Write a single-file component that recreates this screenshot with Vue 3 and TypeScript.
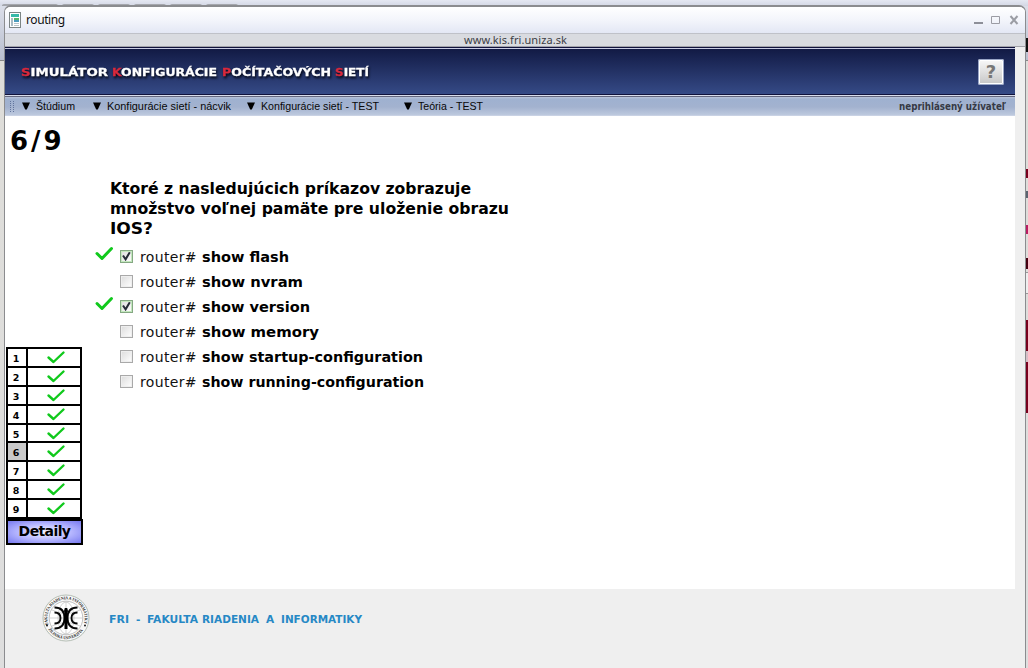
<script setup lang="ts">
interface MenuItem { label: string; cls: string; width: number }
interface Answer { command: string; checked: boolean; width: number }

const menu: MenuItem[] = [
  { label: 'Štúdium', cls: 'm1', width: 39 },
  { label: 'Konfigurácie sietí - nácvik', cls: 'm2', width: 124 },
  { label: 'Konfigurácie sietí - TEST', cls: 'm3', width: 118 },
  { label: 'Teória - TEST', cls: 'm4', width: 65 },
]

const question: string[] = [
  'Ktoré z nasledujúcich príkazov zobrazuje',
  'množstvo voľnej pamäte pre uloženie obrazu',
  'IOS?',
]

const answers: Answer[] = [
  { command: 'show flash', checked: true, width: 87 },
  { command: 'show nvram', checked: false, width: 101 },
  { command: 'show version', checked: true, width: 108 },
  { command: 'show memory', checked: false, width: 117 },
  { command: 'show startup-configuration', checked: false, width: 221 },
  { command: 'show running-configuration', checked: false, width: 222 },
]
const lineWidths: number[] = [361, 399, 43]
const current = 6
</script>

<template>
  <div class="desktop">
    <div class="backdrop">
      <div class="tabs"><i></i><i></i><i></i><i></i><i></i><i></i></div>
      <b class="r1"></b><b class="r2"></b><b class="r3"></b><b class="r4"></b>
      <b class="r5"></b><b class="r6"></b><b class="r7"></b><b class="r8"></b>
    </div>
    <div class="window">
      <div class="titlebar">
        <svg class="page-icon" width="12" height="16" viewBox="0 0 12 16">
          <rect x=".5" y=".5" width="11" height="15" fill="#fff" stroke="#7c8585" />
          <rect x="2" y="2" width="8" height="3" fill="#36b9a9" />
          <rect x="2" y="6" width="2" height="8" fill="#a9bcc4" />
          <rect x="5" y="6" width="5" height="2" fill="#55b56b" />
          <rect x="5" y="8" width="5" height="2" fill="#4b9cbd" />
          <path d="M5 11.5h5M5 13.5h5" stroke="#b8c3c8" />
        </svg>
        <span class="title">routing</span>
        <svg class="controls" width="48" height="14" viewBox="0 0 48 14">
          <rect x="1" y="9" width="9" height="2" fill="#8d8f98" />
          <path d="M18.500 3.500h8v7h-8z" fill="none" stroke="#9b9ca4" />
          <path d="M37.500 3l7 8M44.500 3l-7 8" stroke="#9b9da4" stroke-width="2" />
        </svg>
      </div>
      <div class="address"><span>www.kis.fri.uniza.sk</span></div>
      <div class="page">
        <header class="header">
          <svg class="logo" width="360" height="24" viewBox="0 0 360 24">
            <g class="logo-text">
              <text x="0" y="16.500" textLength="87" lengthAdjust="spacingAndGlyphs"><tspan class="red">S</tspan>IMULÁTOR</text>
              <text x="91" y="16.500" textLength="105" lengthAdjust="spacingAndGlyphs"><tspan class="red">K</tspan>ONFIGURÁCIE</text>
              <text x="201" y="16.500" textLength="109" lengthAdjust="spacingAndGlyphs"><tspan class="red">P</tspan>OČÍTAČOVÝCH</text>
              <text x="314" y="16.500" textLength="34" lengthAdjust="spacingAndGlyphs"><tspan class="red">S</tspan>IETÍ</text>
            </g>
          </svg>
          <div class="help"><span>?</span></div>
        </header>
        <nav class="menu">
          <svg class="grip" width="6" height="11" viewBox="0 0 6 11">
            <path d="M1.500 0v11M4.500 0v11" stroke="#61749c" stroke-dasharray="1 1" />
          </svg>
          <div v-for="m in menu" :key="m.label" class="menu-item" :class="m.cls">
            <svg class="arrow" width="8" height="8" viewBox="0 0 8 8"><path d="M0 .5h8L4.800 7.500h-1.600z" /></svg>
            <svg class="menu-label" :width="m.width + 4" height="15">
              <text x="0" y="11" :textLength="m.width" lengthAdjust="spacingAndGlyphs">{{ m.label }}</text>
            </svg>
          </div>
          <svg class="user" width="112" height="15">
            <text x="1" y="11" textLength="107" lengthAdjust="spacingAndGlyphs">neprihlásený užívateľ</text>
          </svg>
        </nav>
        <main class="content">
          <aside class="side">
            <div class="progress">6/9</div>
            <div class="results">
              <div v-for="n in 9" :key="n" class="result">
                <span class="num" :class="{ current: n === current }">{{ n }}</span>
                <span class="mark">
                  <svg width="18" height="13" viewBox="0 0 18 13"><path d="M1.500 6.500L6.500 11L16.500 1.500" /></svg>
                </span>
              </div>
            </div>
            <button class="details">Detaily</button>
          </aside>
          <section class="quiz">
            <svg class="question" width="420" height="60">
              <text v-for="(q, i) in question" :key="q" x="0" :y="15.5 + i * 20" :textLength="lineWidths[i]" lengthAdjust="spacingAndGlyphs">{{ q }}</text>
            </svg>
            <div v-for="a in answers" :key="a.command" class="answer">
              <span class="tick">
                <svg v-if="a.checked" width="18" height="14" viewBox="0 0 18 14"><path d="M2 6.500L7 11.500L16.500 1.500" /></svg>
              </span>
              <span class="box" :class="{ checked: a.checked }">
                <svg v-if="a.checked" width="11" height="11" viewBox="0 0 11 11"><path d="M2 4.500L4.600 8.300L8.800 1.200" /></svg>
              </span>
              <svg class="label" width="300" height="24">
                <text class="prompt" x="0" y="16.500" textLength="56.500">router#</text>
                <text class="command" x="62" y="16.500" :textLength="a.width" lengthAdjust="spacingAndGlyphs">{{ a.command }}</text>
              </svg>
            </div>
          </section>
        </main>
      </div>
      <footer class="footer">
        <svg class="seal" width="48" height="48" viewBox="0 0 48 48">
          <defs>
            <path id="sealTop" d="M6.400 30.400A18.700 18.700 0 1 1 41.600 30.400" />
            <path id="sealBottom" d="M5.200 33.600A21.100 21.100 0 0 0 42.800 33.600" />
          </defs>
          <circle cx="24" cy="24" r="23" fill="#f8f8f8" stroke="#9aa69a" stroke-width=".7" />
          <circle cx="24" cy="24" r="16.800" fill="#fff" stroke="#999" stroke-width=".6" />
          <g fill="none" stroke="#b5b5b5" stroke-width=".6">
            <ellipse cx="24" cy="24" rx="8" ry="16" />
            <path d="M8 24h32M10 16q14 7 28 0M10 32q14-7 28 0M24 8v32" />
          </g>
          <text class="seal-text"><textPath href="#sealTop" textLength="70" lengthAdjust="spacingAndGlyphs">FAKULTA RIADENIA A INFORMATIKY</textPath></text>
          <text class="seal-text"><textPath href="#sealBottom" startOffset="2" textLength="41" lengthAdjust="spacingAndGlyphs">ŽILINSKÁ UNIVERZITA</textPath></text>
          <circle cx="5" cy="31.500" r=".9" /><circle cx="43" cy="31.500" r=".9" />
          <g fill="none" stroke="#080808" stroke-width="1.900">
            <path d="M12.500 13.500C19.500 13.500 22.500 18 22.500 24s-3 10.500-10 10.500" />
            <path d="M35.500 13.500C28.500 13.500 25.500 18 25.500 24s3 10.500 10 10.500" />
            <path d="M12.500 18.500c4 0 6 2 6 5.500s-2 5.500-6 5.500M35.500 18.500c-4 0-6 2-6 5.500s2 5.500 6 5.500" />
          </g>
          <path d="M22.800 14h2.400l.8 3-.5 2 .7 5-.7 6v5h-3v-5l-.7-6 .7-5-.5-2z" />
        </svg>
        <svg class="faculty" width="260" height="16">
          <text x="0" y="12" textLength="20" lengthAdjust="spacingAndGlyphs">FRI</text>
          <text x="27" y="12">-</text>
          <text x="38" y="12" textLength="51" lengthAdjust="spacingAndGlyphs">FAKULTA</text>
          <text x="93" y="12" textLength="57" lengthAdjust="spacingAndGlyphs">RIADENIA</text>
          <text x="157" y="12">A</text>
          <text x="172" y="12" textLength="81" lengthAdjust="spacingAndGlyphs">INFORMATIKY</text>
        </svg>
      </footer>
    </div>
  </div>
</template>

<style>
body { margin: 0; overflow: hidden; }
</style>

<style scoped>
* { box-sizing: border-box; }
svg { overflow: visible; flex: none; }
.desktop { position: relative; width: 1028px; height: 668px; overflow: hidden; background: #dedfe2; padding: 5px 2px 0 4px; }
.backdrop { position: absolute; inset: 0; background: linear-gradient(#dfe2ec, #b9bfcf 60px, #888 60px 61px, #deddd9 61px, #dedede); }
.tabs { display: flex; gap: 4px; padding-left: 2px; height: 6px; background: linear-gradient(#e5e8f2, #d3d7e4); }
.tabs i { width: 32px; margin-top: 4px; border: 1px solid #a5a7ad; border-radius: 4px 4px 0 0; background: #d5d7dc; }
.tabs i:first-child { width: 56px; }
.backdrop b { position: absolute; left: 1026px; width: 2px; background: #78001d; }
.backdrop .r1 { top: 169px; height: 9px; }
.backdrop .r2 { top: 191px; height: 7px; background: #5b6470; }
.backdrop .r3 { top: 225px; height: 9px; background: #b91b62; }
.backdrop .r4 { top: 258px; height: 11px; background: #450010; }
.backdrop .r5 { top: 320px; height: 93px; }
.backdrop .r6 { top: 351px; height: 11px; background: #d7bec7; }
.backdrop .r7 { top: 38px; height: 14px; background: #111; }
.backdrop .r8 { top: 272px; height: 22px; background: #eee; border: solid #999; border-width: 1px 0; }
.window { position: relative; width: 1022px; height: 668px; border: 1px solid #8b8c8f; border-top-width: 2px; border-radius: 7px 7px 0 0; background: #efefef; overflow: hidden; }
.titlebar { display: flex; align-items: center; height: 26px; padding: 0 4px; background: linear-gradient(#fff, #f3f5fb 50%, #e3e7f4); }
.page-icon { margin-top: -1px; }
.title { margin: -1px 0 0 5px; font: 12px "Noto Sans", sans-serif; letter-spacing: -.4px; color: #111; }
.controls { margin-left: auto; }
.address { height: 14px; border-top: 1px solid #bfc1c8; border-bottom: 1px solid #a2a3aa; background: #d9dbe0; text-align: center; font: 11px/11px "Noto Sans", sans-serif; letter-spacing: .08px; color: #3c3e45; }
.address span { margin-left: 1px; }
.page { width: 1010px; height: 542px; background: #fff; }
.header { display: flex; align-items: center; justify-content: space-between; height: 48px; padding: 0 11px 0 16px; border-top: 1px solid #10123c; border-bottom: 1px solid #10123c; box-shadow: inset 0 1px #c9cce4; background: linear-gradient(#111943, #354a86); }
.logo-text { font: bold 11.300px "DejaVu Sans", sans-serif; fill: #fff; stroke: #fff; stroke-width: .3px; filter: drop-shadow(1px 2px 1px #050918); }
.red { fill: #d9293c; stroke: #d9293c; }
.help { display: flex; align-items: center; justify-content: center; width: 26px; height: 26px; margin-top: 1px; border: 2px solid #fff; border-radius: 2px; outline: 1px solid #9aa6c6; outline-offset: -1px; background: linear-gradient(#f6f6f6, #c9c9c9); font: bold 18px "DejaVu Sans", sans-serif; color: #777; }
.menu { display: flex; align-items: center; height: 21px; padding: 2px 5px 0 4px; border-bottom: 1px solid #c9d2e4; background: linear-gradient(#d7dceb 0 1px, #63667d 1px 2px, #b9c3d9 2px, #9fb1d0 4px, #a3b2cf 12px, #bdc9de); }
.menu-item { display: flex; align-items: center; }
.menu-label { margin-left: 6px; font: 11px "Liberation Sans", sans-serif; fill: #080808; }
.arrow { margin-top: -1px; }
.m1 { width: 71px; margin-left: 7px; }
.m2 { width: 154px; }
.m3 { width: 157px; }
.user { margin-left: auto; font: bold 9.800px "DejaVu Sans", sans-serif; fill: #363a45; }
.content { display: flex; height: 473px; }
.side { width: 90px; padding-left: 1px; }
.progress { height: 231px; padding: 8px 0 0 4px; font: bold 26px/34px "DejaVu Sans", sans-serif; letter-spacing: 3px; color: #000; }
.results { width: 76px; border: 2px solid #000; border-bottom-width: 0; }
.result { display: flex; height: 18.900px; border-bottom: 2px solid #000; }
.num { display: flex; align-items: center; justify-content: center; width: 20px; padding-right: 2px; border-right: 2px solid #000; padding-top: 2px; font: bold 9.500px "DejaVu Sans", sans-serif; }
.num.current { background: #c9c9c9; }
.mark { display: flex; flex: 1; align-items: center; justify-content: center; padding-left: 4px; }
.mark path, .tick path { fill: none; stroke: #10c91c; stroke-width: 2.400; stroke-linecap: round; stroke-linejoin: round; }
.details { display: block; width: 77px; height: 26px; margin-top: .4px; padding: 0 0 3px; border: 2px solid #000; background: radial-gradient(ellipse at center, #f0f0ff 5%, #b8b9ff 50%, #7779ef 100%); font: bold 14px "DejaVu Sans", sans-serif; letter-spacing: -.6px; color: #000; }
.quiz { padding-top: 62px; }
.question { display: block; margin-left: 15px; margin-bottom: 6px; font: bold 16px "DejaVu Sans", sans-serif; }
.answer { display: flex; height: 25px; align-items: center; }
.tick { width: 25px; height: 18px; line-height: 0; margin-top: -1px; }
.tick path { stroke-width: 3; }
.box { display: flex; width: 13px; height: 13px; border: 1px solid #a9a9a9; outline: 1px solid #eee; outline-offset: -2px; background: linear-gradient(135deg, #dcdcdc, #fff); margin-top: -1px; }
.box.checked { border-color: #85a883; outline-color: #c4e8be; }
.box path { fill: none; stroke: #252b36; stroke-width: 2; }
.label { margin-left: 7px; font: 14.500px "DejaVu Sans", sans-serif; fill: #111; }
.label .prompt { font-size: 14px; }
.label .command { font-weight: bold; fill: #000; }
.footer { display: flex; padding: 5px 0 0 37px; }
.faculty { margin: 17px 0 0 19px; font: bold 10.500px "DejaVu Sans", sans-serif; fill: #2688c5; }
.seal-text { font: bold 4.300px "Liberation Serif", serif; fill: #222; }
</style>
